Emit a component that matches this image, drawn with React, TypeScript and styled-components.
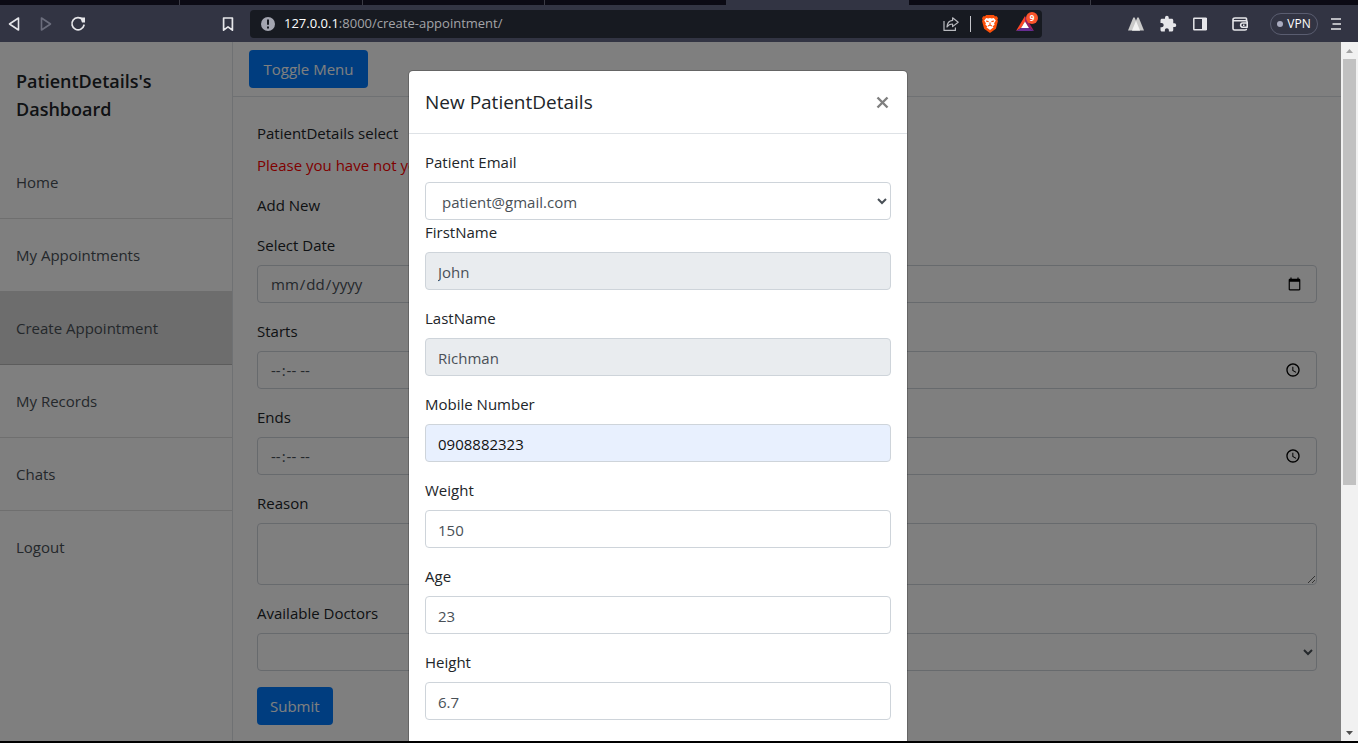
import React from "react";
import styled, { createGlobalStyle } from "styled-components";

const GlobalStyle = createGlobalStyle`
  *, *::before, *::after { box-sizing: border-box; }
  body {
    margin: 0;
    background: #000;
    color: #212529;
    font-family: "Open Sans", "Noto Sans", sans-serif;
    font-size: 15px;
    line-height: 24px;
  }
  button, input, select, textarea { font: inherit; }
`;

const Browser = styled.div`
  display: flex;
  flex-direction: column;
  height: 100vh;
  padding-bottom: 2px;
  overflow: hidden;
`;

/* Browser chrome */

const TabStrip = styled.div`
  display: flex;
  flex: none;
  height: 5px;
  background: #0b0a14;
`;

const BrowserTab = styled.div<{ $width: number; $active?: boolean; $plain?: boolean }>`
  flex: 0 1 ${(p) => p.$width}px;
  border-right: ${(p) => (p.$active || p.$plain ? "none" : "1px solid #3b3b45")};
  background: ${(p) => (p.$active ? "#323443" : "transparent")};
`;

const Toolbar = styled.header`
  display: flex;
  align-items: center;
  flex: none;
  height: 37px;
  padding: 0 12px 0 4px;
  background: #323443;
`;

const IconButton = styled.button<{ $muted?: boolean }>`
  display: flex;
  align-items: center;
  justify-content: center;
  flex: none;
  width: 20px;
  height: 20px;
  padding: 0;
  border: 0;
  background: none;
  color: ${(p) => (p.$muted ? "#6b6d7c" : "#e6e6ea")};
`;

const NavButtons = styled.div`
  display: flex;
  gap: 12px;
  margin-right: 130px;
`;

const AddressBar = styled.div`
  display: flex;
  align-items: center;
  flex: 1;
  height: 28px;
  margin: 0 84px 0 12px;
  padding: 0 4px 0 10px;
  border-radius: 4px;
  background: #171a21;
`;

const Address = styled.div`
  flex: 1;
  margin-left: 8px;
  padding-bottom: 2px;
  color: #a3a4a8;
  font-size: 13px;
  line-height: 20px;
  white-space: nowrap;
`;

const Host = styled.span`
  color: #fff;
`;

const AddressActions = styled.div`
  display: flex;
  align-items: center;
  gap: 9px;
`;

const Divider = styled.span`
  width: 1px;
  height: 16px;
  background: #c4c5ca;
`;

const Extensions = styled.div`
  display: flex;
  align-items: center;
  gap: 12px;
`;

const ExtensionSpacer = styled.span`
  width: 8px;
  margin-right: -12px;
`;

const VpnButton = styled.button`
  display: flex;
  align-items: center;
  justify-content: center;
  gap: 4px;
  width: 48px;
  height: 22px;
  margin: 0 -4px 0 8px;
  padding: 0;
  border: 1px solid #5a5d70;
  border-radius: 11px;
  background: transparent;
  color: #fff;
  font-size: 12px;
  line-height: 16px;
`;

const VpnDot = styled.span`
  width: 6px;
  height: 6px;
  border-radius: 50%;
  background: #a9abbf;
`;

const RewardsBadge = styled.span`
  position: absolute;
  top: -2px;
  right: -3px;
  width: 12px;
  height: 12px;
  border-radius: 50%;
  background: #fb542b;
  color: #fff;
  font-size: 8px;
  font-weight: 700;
  line-height: 12px;
  text-align: center;
`;

const RewardsButton = styled(IconButton)`
  position: relative;
  margin-left: 6px;
  margin-right: 3px;
`;

/* Viewport and scrollbar */

const Viewport = styled.div`
  display: flex;
  flex: 1;
  min-height: 0;
`;

const Page = styled.div`
  position: relative;
  display: flex;
  flex: 1;
  min-width: 0;
  overflow: hidden;
  background: #fff;
`;

const ScrollTrack = styled.div`
  display: flex;
  flex-direction: column;
  justify-content: space-between;
  flex: none;
  width: 17px;
  background: #f1f1f1;
`;

const ScrollArrow = styled.div`
  display: flex;
  align-items: center;
  justify-content: center;
  height: 17px;
`;

const ScrollLane = styled.div`
  flex: 1;
  padding: 0 2px;
`;

const ScrollThumb = styled.div`
  height: 64%;
  background: #c1c1c1;
`;

/* Dashboard */

const Sidebar = styled.nav`
  flex: none;
  width: 233px;
  border-right: 1px solid #dee2e6;
`;

const SidebarHeading = styled.h1`
  margin: 0;
  padding: 25px 16px 23px;
  font-size: 18px;
  font-weight: 600;
  line-height: 28px;
`;

const MenuLink = styled.a<{ $active?: boolean }>`
  display: block;
  height: 73px;
  padding: 24px 16px;
  border-bottom: 1px solid ${(p) => (p.$active ? "#b8b8b8" : "#dfdfdf")};
  background: ${(p) => (p.$active ? "#dadada" : "transparent")};
  box-shadow: ${(p) => (p.$active ? "0 -1px 0 #dadada" : "none")};
  color: #495057;
  text-decoration: none;
  &:last-child { border-bottom: 0; }
`;

const Content = styled.main`
  flex: 1;
  min-width: 0;
`;

const TopBar = styled.div`
  padding: 8px 16px;
  border-bottom: 1px solid #dee2e6;
`;

const PrimaryButton = styled.button<{ $minWidth?: number }>`
  display: block;
  min-width: ${(p) => p.$minWidth ?? 0}px;
  height: 38px;
  padding: 0 13px;
  border: 0;
  border-radius: 4px;
  background: #007bff;
  color: #fff;
`;

const Form = styled.form`
  display: flex;
  flex-direction: column;
  align-items: stretch;
  padding: 24px;
`;

const Field = styled.div<{ $tight?: boolean }>`
  display: flex;
  flex-direction: column;
  gap: 8px;
  margin-bottom: ${(p) => (p.$tight ? "0" : "16px")};
`;

const Label = styled.label`
  color: #212529;
`;

const Notice = styled.span`
  color: #ff0000;
`;

const AddLink = styled.a`
  margin-bottom: 16px;
  color: #212529;
  text-decoration: none;
`;

const Input = styled.input<{ $autofilled?: boolean }>`
  width: 100%;
  height: 38px;
  padding: 6px 12px;
  border: 1px solid #ced4da;
  border-radius: 4px;
  background: ${(p) => (p.$autofilled ? "#e8f0fe" : "#fff")};
  color: ${(p) => (p.$autofilled ? "#111" : "#495057")};
  &[type="text"] { padding: 7px 12px 5px; }
  &:disabled { background: #e9ecef; }
`;

const Select = styled.select`
  width: 100%;
  height: 38px;
  padding: 7px 12px 5px;
  border: 1px solid #ced4da;
  border-radius: 4px;
  background: #fff;
  color: #495057;
`;

const TextArea = styled.textarea`
  display: block;
  width: 100%;
  height: 62px;
  padding: 6px 12px;
  border: 1px solid #ced4da;
  border-radius: 4px;
`;

const SubmitRow = styled.div`
  display: flex;
`;

/* Modal */

const Backdrop = styled.div`
  position: absolute;
  inset: 0;
  display: flex;
  align-items: flex-start;
  justify-content: center;
  padding: 28px 25px 0 0;
  background: rgba(0, 0, 0, 0.5);
`;

const Dialog = styled.section`
  width: 500px;
  border: 1px solid rgba(0, 0, 0, 0.2);
  border-radius: 5px;
  background: #fff;
  background-clip: padding-box;
`;

const DialogHeader = styled.header`
  display: flex;
  align-items: center;
  justify-content: space-between;
  padding: 16px;
  border-bottom: 1px solid #dee2e6;
`;

const DialogTitle = styled.h2`
  margin: 0;
  font-size: 19px;
  font-weight: 500;
  line-height: 30px;
`;

const CloseButton = styled.button`
  display: flex;
  padding: 0 2px;
  border: 0;
  background: none;
  color: #7f7f7f;
`;

const DialogBody = styled.form`
  padding: 16px 16px 32px;
`;

const menu = ["Home", "My Appointments", "Create Appointment", "My Records", "Chats", "Logout"];

const patientFields = [
  { id: "first", label: "FirstName", value: "John", disabled: true },
  { id: "last", label: "LastName", value: "Richman", disabled: true },
  { id: "mobile", label: "Mobile Number", value: "0908882323", autofilled: true },
  { id: "weight", label: "Weight", value: "150" },
  { id: "age", label: "Age", value: "23" },
  { id: "height", label: "Height", value: "6.7" },
];

function BrowserToolbar() {
  return (
    <Toolbar>
      <NavButtons>
        <IconButton aria-label="Back">
          <svg width="20" height="20" viewBox="0 0 20 20" fill="none" stroke="currentColor" strokeWidth="1.6" strokeLinejoin="round">
            <path d="M14.5 4v12L5.5 10z" />
          </svg>
        </IconButton>
        <IconButton aria-label="Forward" $muted>
          <svg width="20" height="20" viewBox="0 0 20 20" fill="none" stroke="currentColor" strokeWidth="1.6" strokeLinejoin="round">
            <path d="M5.5 4v12l9-6z" />
          </svg>
        </IconButton>
        <IconButton aria-label="Reload">
          <svg width="20" height="20" viewBox="0 0 20 20" fill="none" stroke="currentColor" strokeWidth="1.7">
            <path d="M14.6 5.6A6.1 6.1 0 1 0 16 11.2" strokeLinecap="round" />
            <path d="M12.2 3.6h4.8v4.8h-3z" fill="currentColor" stroke="none" />
          </svg>
        </IconButton>
      </NavButtons>
      <IconButton aria-label="Bookmark">
        <svg width="20" height="20" viewBox="0 0 20 20" fill="none" stroke="currentColor" strokeWidth="1.7" strokeLinejoin="round">
          <path d="M5.6 4h8.8v12.2L10 12.8l-4.4 3.4z" />
        </svg>
      </IconButton>
      <AddressBar>
        <svg width="16" height="16" viewBox="0 0 16 16">
          <circle cx="8" cy="8" r="7" fill="#a3a5b0" />
          <path d="M8 3.5v5.2M8 10.5v2" stroke="#171a21" strokeWidth="2" />
        </svg>
        <Address>
          <Host>127.0.0.1</Host>:8000/create-appointment/
        </Address>
        <AddressActions>
          <IconButton aria-label="Share">
            <svg width="18" height="18" viewBox="0 0 18 18" fill="none" stroke="#b8b9be" strokeWidth="1.2" strokeLinejoin="round">
              <path d="M2 6v9.4h11.4v-3" />
              <path d="M10.6 2.8l5.6 4.4-5.6 4.4V9c-2.800 0-4.400 1-5.600 3 .2-3.800 2-6.200 5.600-6.600z" />
            </svg>
          </IconButton>
          <Divider />
          <IconButton aria-label="Shields">
            <svg width="18" height="20" viewBox="0 0 18 20">
              <path d="M5.200 1h7.600l1.200 1.300 1.800-.1 1.200 2-.6 1.500.5 1.500-2 7.600L9 19l-5.900-4.200-2-7.600.5-1.500L1 4.200l1.200-2 1.800.1z" fill="#fb4f0a" />
              <path d="M5.200 4l2 .5L9 4l1.800.5 2-.5 2 2.600-1.700 2.600.5 1.600-2.200 1.600 1.200.8L9 16l-3.600-2.800 1.200-.8-2.200-1.600.5-1.600-1.700-2.600z" fill="#fff" />
              <path d="M5 7l2.600.6M13 7l-2.600.6M9 8.400v2.400M7 12l2-.9 2 .9" stroke="#fb4f0a" strokeWidth="1.100" fill="none" />
            </svg>
          </IconButton>
          <RewardsButton aria-label="Rewards">
            <svg width="20" height="20" viewBox="0 0 20 20">
              <path d="M10 2L1 17l5-3 4-6.500z" fill="#ff4724" />
              <path d="M10 2l9 15-5-3-4-6.500z" fill="#9e1f63" />
              <path d="M1 17h18l-5-3H6z" fill="#662d91" />
              <path d="M10 7.500L6 14h8z" fill="#fff" />
            </svg>
            <RewardsBadge>9</RewardsBadge>
          </RewardsButton>
        </AddressActions>
      </AddressBar>
      <Extensions>
        <IconButton aria-label="Mountain extension">
          <svg width="20" height="20" viewBox="0 0 20 20">
            <path d="M7.300 3.500h1.400L14 16.500H2z" fill="#c9c9c9" />
            <path d="M11.300 3.500h1.400L18 16.500H6z" fill="#c9c9c9" />
            <path d="M10 6.800l4 9.700H6z" fill="#f2f2f2" />
          </svg>
        </IconButton>
        <IconButton aria-label="Extensions">
          <svg width="18" height="18" viewBox="0 0 24 24" fill="currentColor">
            <path d="M20.500 11H19V7c0-1.100-.9-2-2-2h-4V3.500a2.500 2.500 0 0 0-5 0V5H4c-1.100 0-1.990.9-1.990 2v3.800H3.500c1.490 0 2.700 1.210 2.700 2.700s-1.210 2.700-2.700 2.700H2V20c0 1.100.9 2 2 2h3.800v-1.500c0-1.490 1.210-2.700 2.700-2.700s2.700 1.210 2.700 2.700V22H17c1.100 0 2-.9 2-2v-4h1.500a2.500 2.500 0 0 0 0-5z" />
          </svg>
        </IconButton>
        <IconButton aria-label="Side panel">
          <svg width="20" height="20" viewBox="0 0 20 20">
            <rect x="3.800" y="4.300" width="12.400" height="11.400" rx="0.500" fill="none" stroke="currentColor" strokeWidth="1.500" />
            <path d="M12 4h5v12h-5z" fill="currentColor" />
          </svg>
        </IconButton>
        <ExtensionSpacer />
        <IconButton aria-label="Wallet">
          <svg width="20" height="20" viewBox="0 0 20 20" fill="none" stroke="currentColor" strokeWidth="1.600" strokeLinejoin="round">
            <path d="M16.500 7V4.800c0-.5-.4-.8-.8-.8H5C3.700 4 3 4.500 3 5.500v9c0 .9.600 1.500 1.500 1.500h10.500c.9 0 1.500-.6 1.500-1.300" />
            <path d="M3 6.700h12.500c1 0 1.700.5 1.700 1.400v5.200H12.800a2.100 2.100 0 0 1 0-4.300h4.400M13 11.200h1.500" />
          </svg>
        </IconButton>
        <VpnButton>
          <VpnDot />
          VPN
        </VpnButton>
        <IconButton aria-label="Menu">
          <svg width="20" height="20" viewBox="0 0 20 20" stroke="currentColor" strokeWidth="1.700">
            <path d="M5 5h10M6.500 10H15M5 15h10" />
          </svg>
        </IconButton>
      </Extensions>
    </Toolbar>
  );
}

function AppointmentForm() {
  return (
    <Form>
      <Field>
        <Label as="span">PatientDetails select</Label>
        <Notice>Please you have not yet</Notice>
      </Field>
      <AddLink href="#new">Add New</AddLink>
      <Field>
        <Label htmlFor="date">Select Date</Label>
        <Input id="date" type="date" />
      </Field>
      <Field>
        <Label htmlFor="starts">Starts</Label>
        <Input id="starts" type="time" />
      </Field>
      <Field>
        <Label htmlFor="ends">Ends</Label>
        <Input id="ends" type="time" />
      </Field>
      <Field>
        <Label htmlFor="reason">Reason</Label>
        <TextArea id="reason" />
      </Field>
      <Field>
        <Label htmlFor="doctors">Available Doctors</Label>
        <Select id="doctors" />
      </Field>
      <SubmitRow>
        <PrimaryButton type="button">Submit</PrimaryButton>
      </SubmitRow>
    </Form>
  );
}

function PatientDialog() {
  return (
    <Backdrop>
      <Dialog role="dialog" aria-labelledby="dialog-title">
        <DialogHeader>
          <DialogTitle id="dialog-title">New PatientDetails</DialogTitle>
          <CloseButton aria-label="Close">
            <svg width="13" height="13" viewBox="0 0 13 13" stroke="currentColor" strokeWidth="2.400">
              <path d="M1.500 1.500l10 10M11.500 1.500l-10 10" />
            </svg>
          </CloseButton>
        </DialogHeader>
        <DialogBody>
          <Field $tight>
            <Label htmlFor="email">Patient Email</Label>
            <Select id="email">
              <option>patient@gmail.com</option>
            </Select>
          </Field>
          {patientFields.map((f) => (
            <Field key={f.id}>
              <Label htmlFor={f.id}>{f.label}</Label>
              <Input id={f.id} type="text" defaultValue={f.value} disabled={f.disabled} $autofilled={f.autofilled} />
            </Field>
          ))}
        </DialogBody>
      </Dialog>
    </Backdrop>
  );
}

export default function App() {
  return (
    <>
      <GlobalStyle />
      <Browser>
        <TabStrip>
          <BrowserTab $width={180} />
          <BrowserTab $width={183} />
          <BrowserTab $width={182} />
          <BrowserTab $width={181} $plain />
          <BrowserTab $width={183} $active />
          <BrowserTab $width={182} />
        </TabStrip>
        <BrowserToolbar />
        <Viewport>
          <Page>
            <Sidebar>
              <SidebarHeading>PatientDetails's Dashboard</SidebarHeading>
              {menu.map((item) => (
                <MenuLink key={item} href="#" $active={item === "Create Appointment"}>
                  {item}
                </MenuLink>
              ))}
            </Sidebar>
            <Content>
              <TopBar>
                <PrimaryButton type="button" $minWidth={119}>Toggle Menu</PrimaryButton>
              </TopBar>
              <AppointmentForm />
            </Content>
            <PatientDialog />
          </Page>
          <ScrollTrack aria-hidden>
            <ScrollArrow>
              <svg width="7" height="4" viewBox="0 0 7 4"><path d="M0 4L3.500 0 7 4z" fill="#a3a3a3" /></svg>
            </ScrollArrow>
            <ScrollLane>
              <ScrollThumb />
            </ScrollLane>
            <ScrollArrow>
              <svg width="7" height="4" viewBox="0 0 7 4"><path d="M0 0h7L3.500 4z" fill="#505050" /></svg>
            </ScrollArrow>
          </ScrollTrack>
        </Viewport>
      </Browser>
    </>
  );
}
